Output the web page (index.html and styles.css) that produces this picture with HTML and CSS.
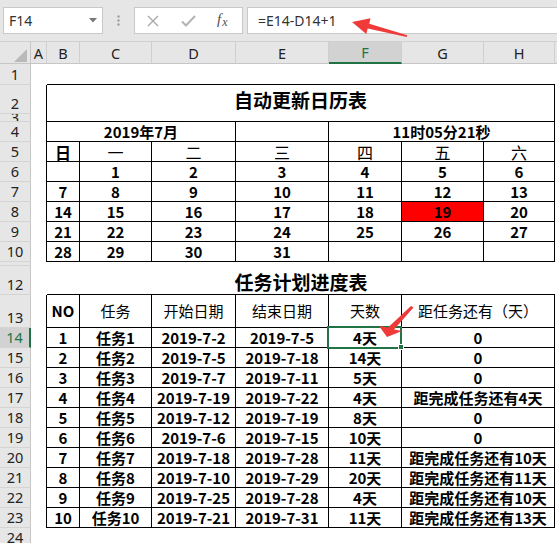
FILE: index.html
```html
<!DOCTYPE html>
<html lang="zh">
<head>
<meta charset="utf-8">
<title>自动更新日历表</title>
<link rel="stylesheet" href="styles.css">
</head>
<body>
<div class="app">
  <div class="fbar">
    <div class="namebox">
      <span>F14</span>
      <svg width="8" height="5" viewBox="0 0 8 5"><path d="M0 0H8L4 4.5Z" fill="#777"/></svg>
    </div>
    <div class="grip">
      <svg width="3" height="11" viewBox="0 0 3 11"><circle cx="1.5" cy="1.5" r="1.2" fill="#a0a0a0"/><circle cx="1.5" cy="5.5" r="1.2" fill="#a0a0a0"/><circle cx="1.5" cy="9.5" r="1.2" fill="#a0a0a0"/></svg>
    </div>
    <div class="btns">
      <svg class="b-x" width="12" height="12" viewBox="0 0 12 12"><path d="M1 1L11 11M11 1L1 11" stroke="#a9a9a9" stroke-width="1.4" fill="none"/></svg>
      <svg class="b-ok" width="15" height="12" viewBox="0 0 15 12"><path d="M1 6.5L5 10.5L14 1" stroke="#b3b3b3" stroke-width="2" fill="none"/></svg>
      <span class="b-fx">f<span class="fx-x">x</span></span>
    </div>
    <div class="formula">=E14-D14+1</div>
  </div>

  <div class="sheet">
    <!-- column headers -->
    <div class="corner"><svg width="13" height="13" viewBox="0 0 13 13"><path d="M0 13L13 0V13Z" fill="#b9b9b9"/></svg></div>
    <div class="ch">A</div><div class="ch">B</div><div class="ch">C</div><div class="ch">D</div><div class="ch">E</div><div class="ch sel">F</div><div class="ch">G</div><div class="ch">H</div><div class="ch last"></div>

    <!-- row 1 -->
    <div class="rh">1</div><div></div><div class="tb s7"></div><div></div>
    <!-- row 2-3 -->
    <div class="rh">2</div><div class="lb"></div><div class="t title">自动更新日历表</div><div></div>
    <div class="rh small">3</div><div class="lb"></div><div></div>
    <!-- row 4 -->
    <div class="rh">4</div><div class="lb"></div><div class="t s3">2019年7月</div><div class="t"></div><div class="t s3">11时05分21秒</div><div></div>
    <!-- row 5 -->
    <div class="rh">5</div><div class="lb"></div><div class="t wd">日</div><div class="t wd w">一</div><div class="t wd w">二</div><div class="t wd w">三</div><div class="t wd w">四</div><div class="t wd w">五</div><div class="t wd w">六</div><div></div>
    <!-- row 6 -->
    <div class="rh">6</div><div class="lb"></div><div class="t"></div><div class="t">1</div><div class="t">2</div><div class="t">3</div><div class="t">4</div><div class="t">5</div><div class="t">6</div><div></div>
    <!-- row 7 -->
    <div class="rh">7</div><div class="lb"></div><div class="t">7</div><div class="t">8</div><div class="t">9</div><div class="t">10</div><div class="t">11</div><div class="t">12</div><div class="t">13</div><div></div>
    <!-- row 8 -->
    <div class="rh">8</div><div class="lb"></div><div class="t">14</div><div class="t">15</div><div class="t">16</div><div class="t">17</div><div class="t">18</div><div class="t red">19</div><div class="t">20</div><div></div>
    <!-- row 9 -->
    <div class="rh">9</div><div class="lb"></div><div class="t">21</div><div class="t">22</div><div class="t">23</div><div class="t">24</div><div class="t">25</div><div class="t">26</div><div class="t">27</div><div></div>
    <!-- row 10 -->
    <div class="rh">10</div><div class="lb"></div><div class="t">28</div><div class="t">29</div><div class="t">30</div><div class="t">31</div><div class="t"></div><div class="t"></div><div class="t"></div><div></div>
    <!-- row 11 (very short) -->
    <div class="rh"></div><div class="s9"></div>
    <!-- row 12 -->
    <div class="rh">12</div><div></div><div class="tb s7 title2">任务计划进度表</div><div></div>
    <!-- row 13 -->
    <div class="rh">13</div><div class="lb"></div><div class="t">NO</div><div class="t w">任务</div><div class="t w">开始日期</div><div class="t w">结束日期</div><div class="t w">天数</div><div class="t w s2">距任务还有（天）</div><div></div>
    <!-- rows 14-23 -->
    <div class="rh sel">14</div><div class="lb"></div><div class="t">1</div><div class="t">任务1</div><div class="t">2019-7-2</div><div class="t">2019-7-5</div><div class="t">4天</div><div class="t s2">0</div><div></div>
    <div class="rh">15</div><div class="lb"></div><div class="t">2</div><div class="t">任务2</div><div class="t">2019-7-5</div><div class="t">2019-7-18</div><div class="t">14天</div><div class="t s2">0</div><div></div>
    <div class="rh">16</div><div class="lb"></div><div class="t">3</div><div class="t">任务3</div><div class="t">2019-7-7</div><div class="t">2019-7-11</div><div class="t">5天</div><div class="t s2">0</div><div></div>
    <div class="rh">17</div><div class="lb"></div><div class="t">4</div><div class="t">任务4</div><div class="t">2019-7-19</div><div class="t">2019-7-22</div><div class="t">4天</div><div class="t s2">距完成任务还有4天</div><div></div>
    <div class="rh">18</div><div class="lb"></div><div class="t">5</div><div class="t">任务5</div><div class="t">2019-7-12</div><div class="t">2019-7-19</div><div class="t">8天</div><div class="t s2">0</div><div></div>
    <div class="rh">19</div><div class="lb"></div><div class="t">6</div><div class="t">任务6</div><div class="t">2019-7-6</div><div class="t">2019-7-15</div><div class="t">10天</div><div class="t s2">0</div><div></div>
    <div class="rh">20</div><div class="lb"></div><div class="t">7</div><div class="t">任务7</div><div class="t">2019-7-18</div><div class="t">2019-7-28</div><div class="t">11天</div><div class="t s2">距完成任务还有10天</div><div></div>
    <div class="rh">21</div><div class="lb"></div><div class="t">8</div><div class="t">任务8</div><div class="t">2019-7-10</div><div class="t">2019-7-29</div><div class="t">20天</div><div class="t s2">距完成任务还有11天</div><div></div>
    <div class="rh">22</div><div class="lb"></div><div class="t">9</div><div class="t">任务9</div><div class="t">2019-7-25</div><div class="t">2019-7-28</div><div class="t">4天</div><div class="t s2">距完成任务还有10天</div><div></div>
    <div class="rh">23</div><div class="lb"></div><div class="t">10</div><div class="t">任务10</div><div class="t">2019-7-21</div><div class="t">2019-7-31</div><div class="t">11天</div><div class="t s2">距完成任务还有13天</div><div></div>
    <!-- row 24 -->
    <div class="rh">24</div><div class="s9"></div>

    <div class="selbox"></div>
    <div class="handle"></div>
  </div>

  <svg class="overlay" width="557" height="543" viewBox="0 0 557 543">
    <polygon points="352,22 370.5,18.2 369.3,23.8 407.2,35.3 406.8,37 367.7,28.6 366.3,34" fill="#f03a3a"/>
    <polygon points="387,337 379,326 388,327.5 411,306 413.5,307.5 394,329.5 402,331" fill="#f03a3a"/>
  </svg>
</div>
</body>
</html>
```

FILE: styles.css
```css
html, body {
  margin: 0;
  padding: 0;
  background: #fff;
}

body {
  width: 557px;
  height: 543px;
  overflow: hidden;
  font-family: "Noto Sans CJK SC", "Noto Sans", sans-serif;
  color: #000;
}

.app {
  position: relative;
  width: 557px;
  height: 543px;
  overflow: hidden;
}

/* ---------- formula bar ---------- */
.fbar {
  display: flex;
  align-items: center;
  height: 41px;
  background: #e6e6e6;
}

.namebox {
  margin-left: 3px;
  width: 100px;
  height: 27px;
  box-sizing: border-box;
  background: #fff;
  border: 1px solid #c9c9c9;
  display: flex;
  align-items: center;
  justify-content: space-between;
  padding: 0 5px 0 5px;
  font: 14px "Noto Sans", sans-serif;
  color: #333;
}

.grip {
  width: 31px;
  display: flex;
  justify-content: center;
}

.btns {
  width: 109px;
  height: 27px;
  box-sizing: border-box;
  background: #fff;
  border: 1px solid #c9c9c9;
  display: flex;
  align-items: center;
  padding-left: 12px;
}

.b-x { margin-right: 22px; }
.b-ok { margin-right: 21px; }

.b-fx {
  font: italic 15px "Liberation Serif", serif;
  color: #505050;
  line-height: 1;
  margin-top: -2px;
}

.fx-x {
  font-size: 12px;
  position: relative;
  top: 2px;
  margin-left: 1px;
}

.formula {
  margin-left: 4px;
  flex: 1;
  height: 27px;
  box-sizing: border-box;
  background: #fff;
  border: 1px solid #c9c9c9;
  border-right: none;
  padding-left: 10px;
  display: flex;
  align-items: center;
  font: 14px "Noto Sans", sans-serif;
  color: #333;
}

/* ---------- sheet grid ---------- */
.sheet {
  position: relative;
  display: grid;
  grid-template-columns: 31px 16px 33px 72px 84px 93px 73px 82px 71px 1fr;
  grid-template-rows: 23px 21px 29px 8px repeat(7, 20px) 4px 29px 33px repeat(11, 20px);
}

.corner {
  background: #e6e6e6;
  border-top: 1px solid #d0d0d0;
  border-bottom: 1px solid #c6c6c6;
  border-right: 1px solid #c6c6c6;
  display: flex;
  justify-content: flex-end;
  align-items: flex-end;
  padding: 0 3px 1px 0;
}

.ch {
  background: #e6e6e6;
  border-top: 1px solid #d0d0d0;
  border-bottom: 1px solid #c6c6c6;
  border-right: 1px solid #cfcfcf;
  display: flex;
  align-items: center;
  justify-content: center;
  font: 14.5px "Noto Sans", sans-serif;
  color: #222;
}

.ch.last { border-right: none; }

.ch.sel {
  background: #d2d2d2;
  border-bottom: 2px solid #217346;
  color: #217346;
}

.rh {
  background: #e6e6e6;
  border-right: 1px solid #c6c6c6;
  border-bottom: 1px solid #d4d4d4;
  display: flex;
  justify-content: center;
  align-items: flex-end;
  overflow: hidden;
  font: 14.5px/19px "Noto Sans", sans-serif;
  color: #222;
}

.rh.small {
  line-height: 7px;
  align-items: flex-start;
}

.rh.sel {
  background: #d2d2d2;
  border-right: 2px solid #217346;
  color: #217346;
}

/* ---------- cells ---------- */
.lb { border-right: 1px solid #000; }
.tb { border-bottom: 1px solid #000; }

.t {
  border-right: 1px solid #000;
  border-bottom: 1px solid #000;
  display: flex;
  align-items: center;
  justify-content: center;
  font-weight: 700;
  font-size: 15px;
  line-height: 18px;
  white-space: nowrap;
}

.s2 { grid-column: span 2; }
.s3 { grid-column: span 3; }
.s7 { grid-column: span 7; }
.s9 { grid-column: span 9; }

.title {
  grid-column: span 7;
  grid-row: span 2;
  font-size: 19px;
  line-height: 24px;
  padding-bottom: 6px;
}

.title2 {
  display: flex;
  align-items: flex-end;
  justify-content: center;
  font-weight: 700;
  font-size: 19px;
  line-height: 24px;
}

.wd { font-size: 16px; }
.w { font-weight: 400; }

.red { background: #ff0000; }

/* ---------- selection ---------- */
.selbox {
  position: absolute;
  left: 327px;
  top: 285px;
  width: 75px;
  height: 23px;
  box-sizing: border-box;
  border: 2px solid #217346;
}

.handle {
  position: absolute;
  left: 398px;
  top: 303px;
  width: 6px;
  height: 6px;
  box-sizing: border-box;
  background: #217346;
  border: 1px solid #fff;
}

.overlay {
  position: absolute;
  left: 0;
  top: 0;
  pointer-events: none;
}
```
